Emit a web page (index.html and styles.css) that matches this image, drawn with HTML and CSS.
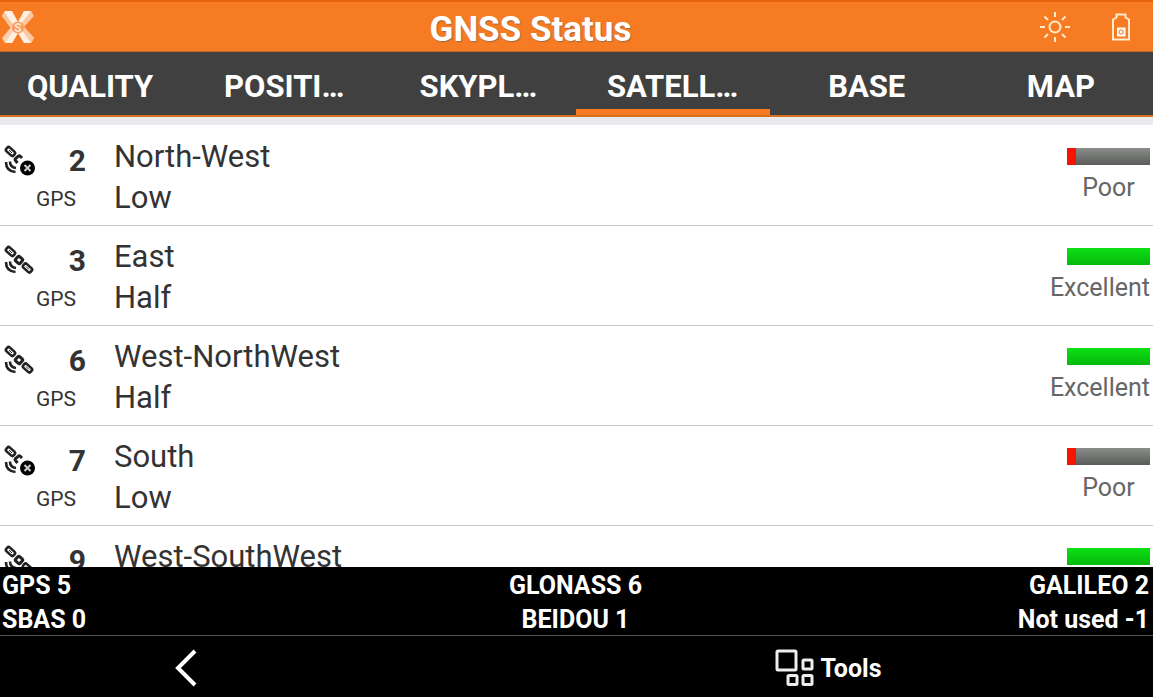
FILE: index.html
```html
<!DOCTYPE html>
<html lang="en">
<head>
    <meta charset="UTF-8">
    <meta name="viewport" content="width=device-width, initial-scale=1.0">
    <title>GNSS Status</title>
    <link rel="stylesheet" href="styles.css">
</head>
<body>
    <!-- Shared icons -->
    <svg class="sprite" aria-hidden="true">
        <symbol id="sat" viewBox="0 0 32 32">
            <g fill="none" stroke="#222" stroke-width="2.6">
                <rect x="1.5" y="4" width="10" height="5" rx="2" transform="rotate(42 6.5 6.5)"/>
                <path d="M5 5l3 3" stroke-width="1"/>
                <rect x="12" y="12" width="6" height="6" rx="1.5" transform="rotate(42 15 15)" stroke-width="3"/>
                <rect x="18.5" y="20.5" width="10" height="5" rx="2" transform="rotate(42 23.5 23)"/>
                <path d="M22 21.5l3 3" stroke-width="1"/>
                <path d="M6 16.5c0 3.500 2 6 6 6.500M2 17c0 6 3.500 9.500 9.500 10"/>
            </g>
        </symbol>
        <symbol id="sat-off" viewBox="0 0 32 32">
            <g fill="none" stroke="#222" stroke-width="2.6">
                <rect x="1.500" y="4" width="10" height="5" rx="2" transform="rotate(42 6.5 6.5)"/>
                <path d="M5 5l3 3" stroke-width="1"/>
                <path d="M13.500 18l-2-2.500q-1-1 0-2l3-2.500q1-.5 2 .5l1.500 1.500" stroke-width="3"/>
                <path d="M6 16.5c0 3.500 2 6 6 6.500M2 17c0 6 3.500 9.500 9.500 10"/>
            </g>
            <circle cx="23.500" cy="23" r="7.500" fill="#000"/>
            <path d="M20.500 20l6 6M26.500 20l-6 6" stroke="#ccc" stroke-width="2"/>
        </symbol>
    </svg>

    <header class="topbar">
        <svg class="logo" viewBox="0 0 34 34" aria-hidden="true">
            <path d="M4 1h7l6 11-5 5L1 6z" fill="#fff0e4"/>
            <path d="M1 6l3-3 9 13-2 4z" fill="#fbc7a0"/>
            <path d="M23 1h7l3 5-11 12-5-6z" fill="#fbc7a0"/>
            <path d="M23 1h7L19 15l-2-3z" fill="#fff0e4"/>
            <path d="M11 16l6 7-6 10H4l-3-5z" fill="#fcd2b2"/>
            <path d="M14 19l3 4-6 10H4z" fill="#fff0e4"/>
            <path d="M22 16l11 12-3 5h-7l-6-10z" fill="#fff0e4"/>
            <path d="M22 16l11 12-3 5-10-14z" fill="#fbc7a0"/>
            <circle cx="17" cy="17.500" r="6" fill="#f79a5c"/>
            <text class="logo-text" x="17" y="22" text-anchor="middle">S</text>
        </svg>
        <h1>GNSS Status</h1>
        <div class="status">
            <svg width="30" height="30" viewBox="0 0 30 30" fill="none" stroke="#ffeccb" stroke-width="2" aria-hidden="true">
                <circle cx="15" cy="15" r="5.500"/>
                <path d="M15 0v5M15 25v5M0 15h5M25 15h5M4.500 4.500l3.500 3.500M22 22l3.500 3.500M25.500 4.500L22 8M8 22l-3.500 3.500"/>
            </svg>
            <svg width="18" height="28" viewBox="0 0 18 28" aria-hidden="true">
                <path d="M4.500 1.500h9v3l3.500 2V26.500H1V6.500l3.500-2z" fill="none" stroke="#ffeccb" stroke-width="2"/>
                <path d="M5 14.500h8.500v9H5z" fill="#fff"/>
                <circle cx="9.200" cy="19" r="2" fill="none" stroke="#f5a066" stroke-width="1.500"/>
            </svg>
        </div>
    </header>

    <nav class="tabs">
        <a href="#quality">QUALITY</a>
        <a href="#position">POSITI…</a>
        <a href="#skyplot">SKYPL…</a>
        <a href="#satellites" class="active">SATELL…</a>
        <a href="#base">BASE</a>
        <a href="#map">MAP</a>
    </nav>

    <main class="sat-list">
        <div class="sat">
            <svg class="sat-icon" aria-hidden="true"><use href="#sat-off"/></svg>
            <div class="sat-id"><strong>2</strong><span>GPS</span></div>
            <div class="sat-info"><p>North-West</p><p>Low</p></div>
            <div class="signal"><div class="bar poor"></div><span>Poor</span></div>
        </div>
        <div class="sat">
            <svg class="sat-icon" aria-hidden="true"><use href="#sat"/></svg>
            <div class="sat-id"><strong>3</strong><span>GPS</span></div>
            <div class="sat-info"><p>East</p><p>Half</p></div>
            <div class="signal"><div class="bar"></div><span>Excellent</span></div>
        </div>
        <div class="sat">
            <svg class="sat-icon" aria-hidden="true"><use href="#sat"/></svg>
            <div class="sat-id"><strong>6</strong><span>GPS</span></div>
            <div class="sat-info"><p>West-NorthWest</p><p>Half</p></div>
            <div class="signal"><div class="bar"></div><span>Excellent</span></div>
        </div>
        <div class="sat">
            <svg class="sat-icon" aria-hidden="true"><use href="#sat-off"/></svg>
            <div class="sat-id"><strong>7</strong><span>GPS</span></div>
            <div class="sat-info"><p>South</p><p>Low</p></div>
            <div class="signal"><div class="bar poor"></div><span>Poor</span></div>
        </div>
        <div class="sat">
            <svg class="sat-icon" aria-hidden="true"><use href="#sat"/></svg>
            <div class="sat-id"><strong>9</strong></div>
            <div class="sat-info"><p>West-SouthWest</p></div>
            <div class="signal"><div class="bar"></div></div>
        </div>
    </main>

    <section class="counts">
        <span>GPS 5</span>
        <span>GLONASS 6</span>
        <span>GALILEO 2</span>
        <span>SBAS 0</span>
        <span>BEIDOU 1</span>
        <span>Not used -1</span>
    </section>

    <footer class="actions">
        <button type="button" aria-label="Back">
            <svg width="24" height="38" viewBox="0 0 24 38" fill="none" stroke="#fff" stroke-width="4" aria-hidden="true">
                <path d="M21 2L4 19l17 17"/>
            </svg>
        </button>
        <button type="button" class="tools">
            <svg width="40" height="38" viewBox="0 0 40 38" fill="none" stroke="#eee" stroke-width="3" aria-hidden="true">
                <rect x="2" y="2" width="19" height="19" rx="1"/>
                <rect x="28" y="11" width="9" height="9" rx="1"/>
                <rect x="13" y="26.500" width="9" height="9" rx="1"/>
                <rect x="28" y="26.500" width="9" height="9" rx="1"/>
            </svg>
            Tools
        </button>
    </footer>
</body>
</html>
```
FILE: styles.css
```css
* {
    margin: 0;
    padding: 0;
    box-sizing: border-box;
}
body {
    display: flex;
    flex-direction: column;
    height: 100vh;
    overflow: hidden;
    background-color: #fff;
    color: #333;
    font-family: Roboto, sans-serif;
}
.sprite {
    display: none;
}
.topbar {
    display: grid;
    grid-template-columns: 1fr auto 1fr;
    align-items: center;
    height: 52px;
    padding: 0 23px 0 1px;
    background-color: #f67b22;
    border-top: 2px solid #e8640a;
    border-bottom: 1px solid #c0692c;
    color: #fff;
}
.logo {
    width: 34px;
    height: 34px;
}
.logo-text {
    font-size: 12px;
    font-weight: bold;
    fill: #ffe3cc;
}
.topbar h1 {
    padding: 6px 70px 0 0;
    font-size: 35px;
    line-height: 40px;
    font-weight: bold;
    text-shadow: 1px 1px 1px #a06a40;
}
.status {
    display: flex;
    justify-content: flex-end;
    align-items: center;
    gap: 42px;
}
.tabs {
    display: grid;
    grid-template-columns: repeat(6, 1fr);
    height: 65px;
    margin: 0 -5px 0 -7px;
    background-color: #404040;
    border-bottom: 2px solid #d8701f;
}
.tabs a {
    padding-top: 15px;
    color: #fff;
    font-size: 31px;
    line-height: 40px;
    font-weight: bold;
    text-align: center;
    text-decoration: none;
}
.tabs a.active {
    border-bottom: 6px solid #f67b22;
}
.sat-list {
    flex: 1;
    min-height: 0;
    overflow: hidden;
    padding-top: 1px;
    border-top: 8px solid #e9eaee;
}
.sat {
    display: flex;
    height: 100px;
    padding: 10px 3px 0 4px;
    border-bottom: 1px solid #c8c8c8;
}
.sat-icon {
    width: 32px;
    height: 32px;
    margin-top: 9px;
}
.sat-id {
    display: flex;
    flex-direction: column;
    width: 50px;
    padding-top: 7px;
    text-align: right;
}
.sat-id strong {
    font-size: 30px;
    line-height: 36px;
}
.sat-id span {
    padding-right: 10px;
    font-size: 21px;
    line-height: 40px;
}
.sat-info {
    flex: 1;
    padding-left: 28px;
    font-size: 31px;
    line-height: 41px;
}
.signal {
    display: flex;
    flex-direction: column;
    align-items: flex-end;
    padding-top: 12px;
    color: #666;
    font-size: 25px;
    line-height: 30px;
}
.bar {
    width: 83px;
    height: 17px;
    margin-bottom: 8px;
    background: linear-gradient(#0de016, #05b90c);
}
.bar.poor {
    background: linear-gradient(to right, #f41400 9px, transparent 9px), linear-gradient(#8b8d8b, #595c59);
}
.bar.poor + span {
    width: 83px;
    text-align: center;
}
.counts {
    display: grid;
    grid-template-columns: 1fr auto 1fr;
    height: 69px;
    padding: 2px 4px 0 2px;
    background-color: #000;
    border-bottom: 1px solid #555;
    color: #fff;
    font-size: 25px;
    line-height: 34px;
    font-weight: bold;
}
.counts span:nth-child(3n + 2) {
    text-align: center;
}
.counts span:nth-child(3n) {
    text-align: right;
}
.actions {
    display: grid;
    grid-template-columns: 32% 1fr;
    height: 61px;
    background-color: #000;
}
.actions button {
    display: flex;
    justify-content: center;
    align-items: center;
    gap: 5px;
    padding: 3px 0 0 3px;
    background: none;
    border: none;
    color: #fff;
    font: bold 25px Roboto, sans-serif;
    cursor: pointer;
}
.actions .tools {
    padding-left: 135px;
}
```
